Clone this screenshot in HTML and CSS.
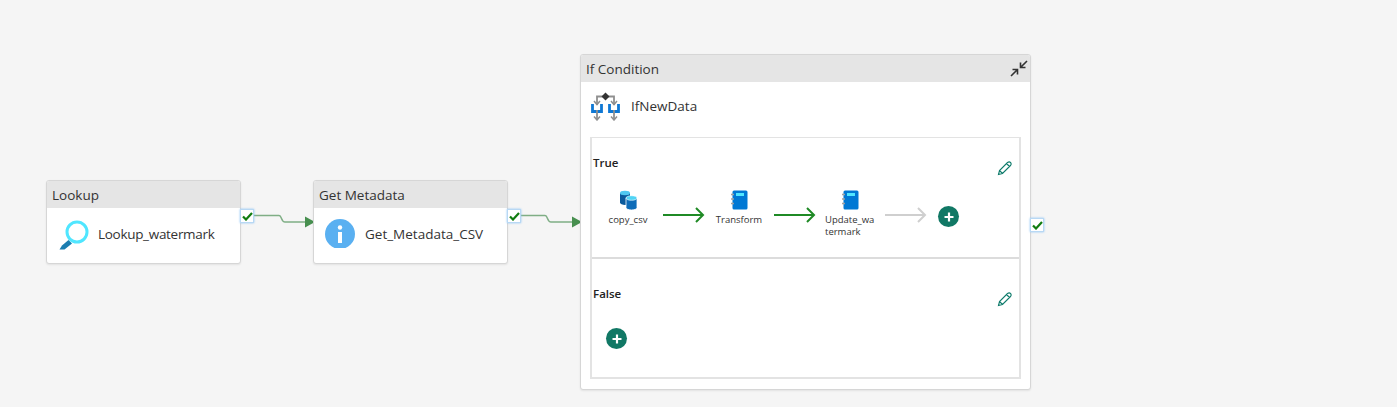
FILE: index.html
```html
<!DOCTYPE html>
<html lang="en">
<head>
<meta charset="utf-8">
<title>Pipeline canvas</title>
<link rel="stylesheet" href="styles.css">
</head>
<body>
<main class="canvas">
  <svg class="wires" width="1397" height="407" viewBox="0 0 1397 407" aria-hidden="true">
    <path class="wire" d="M254 215.5H279c3 0 2 6.500 6 6.500H306"/>
    <path class="wire-head" d="M305 216.500L315 222L305 227.500Z"/>
    <path class="wire" d="M521 215.500H545c3 0 2 6.500 6 6.500H573"/>
    <path class="wire-head" d="M572 216.500L582 222L572 227.500Z"/>
  </svg>

  <section class="card card-lookup">
    <header class="card-head">Lookup</header>
    <div class="card-body">
      <svg class="card-icon" width="30" height="32" viewBox="0 0 30 32" aria-hidden="true">
        <path d="M0.500 30.500L3 26.500L9.500 21L13 24.500L5.500 30.500Z" fill="#1b7db0"/>
        <circle cx="18" cy="13" r="10" fill="#fff" stroke="#50e6ff" stroke-width="3"/>
      </svg>
      <span class="card-name name-tight">Lookup_watermark</span>
    </div>
  </section>
  <span class="check check-1"><svg width="11" height="9" viewBox="0 0 11 9" aria-hidden="true"><path d="M1 4.500L4 7.500L10 1" fill="none" stroke="#107c10" stroke-width="2.200"/></svg></span>

  <section class="card card-meta">
    <header class="card-head">Get Metadata</header>
    <div class="card-body">
      <svg class="card-icon" width="30" height="29" viewBox="0 0 30 29" aria-hidden="true">
        <circle cx="15" cy="15" r="15" fill="#5ab0f1"/>
        <circle cx="15" cy="8.500" r="2.200" fill="#fff"/>
        <rect x="13" y="13" width="4" height="11" fill="#fff"/>
      </svg>
      <span class="card-name">Get_Metadata_CSV</span>
    </div>
  </section>
  <span class="check check-2"><svg width="11" height="9" viewBox="0 0 11 9" aria-hidden="true"><path d="M1 4.500L4 7.500L10 1" fill="none" stroke="#107c10" stroke-width="2.200"/></svg></span>

  <section class="card card-if">
    <header class="card-head if-head">
      <span>If Condition</span>
      <svg width="18" height="17" viewBox="0 0 18 17" aria-hidden="true">
        <path d="M17 1L11 7M10.500 2.500V7.500H15.500M1 16L7 10M2.500 9.500H7.500V14.500" fill="none" stroke="#333" stroke-width="1.600"/>
      </svg>
    </header>
    <div class="if-title">
      <svg width="30" height="30" viewBox="0 0 30 30" aria-hidden="true">
        <path d="M6 14V5.500H23V14" fill="none" stroke="#8f8f8f" stroke-width="1.800"/>
        <path d="M3 10L6 13.500L9 10M20 10L23 13.500L26 10" fill="none" stroke="#8f8f8f" stroke-width="1.500"/>
        <path d="M14.500 1.500L18.500 5.500L14.500 9.500L10.500 5.500Z" fill="#333"/>
        <path d="M1.500 13V20.500H10.500V13M18.500 13V20.500H27.500V13" fill="none" stroke="#0f78d4" stroke-width="2.800"/>
        <path d="M6 19V29M23 19V29" stroke="#8f8f8f" stroke-width="1.800"/>
        <path d="M3 25.500L6 29L9 25.500M20 25.500L23 29L26 25.500" fill="none" stroke="#8f8f8f" stroke-width="1.500"/>
      </svg>
      <span class="card-name">IfNewData</span>
    </div>
    <div class="branches">
      <div class="branch branch-true">
        <div class="branch-head">
          <span class="branch-label">True</span>
          <svg class="pencil" width="15" height="15" viewBox="0 0 15 15" aria-hidden="true"><path d="M1.500 13.500L2.500 9.500L10.500 1.500C11.500 .8 13 .9 13.600 1.700C14.300 2.600 14.200 3.700 13.500 4.500L5.500 12.500ZM2.500 9.500L5.500 12.500M9.500 2.500L12.500 5.500" fill="none" stroke="#107c6c" stroke-width="1.100"/></svg>
        </div>
        <div class="flow">
          <div class="activity">
            <svg width="19" height="20" viewBox="0 0 19 20" aria-hidden="true">
              <path d="M1 3V12.500C1 14 3.500 15 6 15S11 14 11 12.500V3Z" fill="#0b5a9c"/>
              <ellipse cx="6" cy="3" rx="5" ry="2.200" fill="#50c8f0"/>
              <path d="M7 8V17.500C7 19 9.500 20 12.500 20S18 19 18 17.500V8Z" fill="#0e6cb8" stroke="#fff" stroke-width=".8"/>
              <ellipse cx="12.500" cy="8" rx="5.500" ry="2.300" fill="#50d4f5" stroke="#fff" stroke-width=".6"/>
            </svg>
            <span class="activity-name">copy_csv</span>
          </div>
          <svg class="arrow" width="41" height="16" viewBox="0 0 41 16" aria-hidden="true"><path class="arrow-ok" d="M0 8H40M33 1L40 8L33 15"/></svg>
          <div class="activity">
            <svg width="17" height="20" viewBox="0 0 17 20" aria-hidden="true">
              <rect x="1.500" y="0.500" width="15" height="19" rx="1.500" fill="#0078d4"/>
              <rect x="5" y="3" width="8" height="3" fill="#50e6ff"/>
              <path d="M0 4.500H3M0 9H3M0 13.500H3" stroke="#a0a0a0" stroke-width="1.400"/>
            </svg>
            <span class="activity-name">Transform</span>
          </div>
          <svg class="arrow" width="41" height="16" viewBox="0 0 41 16" aria-hidden="true"><path class="arrow-ok" d="M0 8H40M33 1L40 8L33 15"/></svg>
          <div class="activity">
            <svg width="17" height="20" viewBox="0 0 17 20" aria-hidden="true">
              <rect x="1.500" y="0.500" width="15" height="19" rx="1.500" fill="#0078d4"/>
              <rect x="5" y="3" width="8" height="3" fill="#50e6ff"/>
              <path d="M0 4.500H3M0 9H3M0 13.500H3" stroke="#a0a0a0" stroke-width="1.400"/>
            </svg>
            <span class="activity-name activity-name-wrap">Update_watermark</span>
          </div>
          <svg class="arrow" width="41" height="16" viewBox="0 0 41 16" aria-hidden="true"><path class="arrow-idle" d="M0 8H40M33 1L40 8L33 15"/></svg>
          <span class="add add-true"><svg width="10" height="10" viewBox="0 0 10 10" aria-hidden="true"><path d="M5 .5V9.500M.5 5H9.500" stroke="#fff" stroke-width="2.200"/></svg></span>
        </div>
      </div>
      <div class="branch branch-false">
        <div class="branch-head">
          <span class="branch-label">False</span>
          <svg class="pencil" width="15" height="15" viewBox="0 0 15 15" aria-hidden="true"><path d="M1.500 13.500L2.500 9.500L10.500 1.500C11.500 .8 13 .9 13.600 1.700C14.300 2.600 14.200 3.700 13.500 4.500L5.500 12.500ZM2.500 9.500L5.500 12.500M9.500 2.500L12.500 5.500" fill="none" stroke="#107c6c" stroke-width="1.100"/></svg>
        </div>
        <span class="add add-false"><svg width="10" height="10" viewBox="0 0 10 10" aria-hidden="true"><path d="M5 .5V9.500M.5 5H9.500" stroke="#fff" stroke-width="2.200"/></svg></span>
      </div>
    </div>
  </section>
  <span class="check check-3"><svg width="11" height="9" viewBox="0 0 11 9" aria-hidden="true"><path d="M1 4.500L4 7.500L10 1" fill="none" stroke="#107c10" stroke-width="2.200"/></svg></span>
</main>
</body>
</html>
```
FILE: styles.css
```css
* { box-sizing: border-box; }
html, body { margin: 0; height: 100%; }
body {
  background: #f5f5f5;
  color: #303030;
  font-family: "Open Sans", "Noto Sans", "Liberation Sans", sans-serif;
  overflow: hidden;
}
.canvas { position: relative; width: 1397px; height: 407px; }
.wires { position: absolute; left: 0; top: 0; }
.wire { fill: none; stroke: #7fae85; stroke-width: 1.500; }
.wire-head { fill: #478f4f; }

.card {
  position: absolute;
  background: #fff;
  border: 1px solid #d6d6d6;
  border-radius: 3px;
  box-shadow: 0 1px 2px rgba(0, 0, 0, .08);
  overflow: hidden;
}
.card-lookup { left: 46px; top: 180px; width: 195px; height: 84px; }
.card-meta { left: 313px; top: 180px; width: 195px; height: 84px; }
.card-if { left: 580px; top: 54px; width: 451px; height: 336px; }
.card-head {
  height: 27px;
  padding: 1px 0 0 5px;
  background: #e5e5e5;
  font-size: 13.500px;
  line-height: 27px;
  color: #333;
}
.card-body { display: flex; align-items: flex-start; height: 56px; padding: 11px 0 0 11px; }
.card-icon { flex: none; }
.card-name { margin-left: 10px; font-size: 13.500px; line-height: 30px; color: #333; }
.card-lookup .card-body { padding-left: 12px; }
.card-lookup .card-name { margin-left: 9px; }
.name-tight { letter-spacing: -.3px; }

.if-head { display: flex; justify-content: space-between; align-items: center; padding: 0 2px 0 5px; }
.if-head span { margin-top: 1px; }
.if-title { display: flex; align-items: center; height: 48px; margin-bottom: 7px; padding-left: 10px; }
.if-title svg { flex: none; }
.if-title .card-name { margin-left: 10px; }

.branches { margin: 0 9px; width: 431px; height: 242px; border: 2px solid #e3e3e3; border-top-width: 1px; }
.branch { position: relative; padding: 0 7px 0 1px; }
.branch-true { height: 121px; border-bottom: 2px solid #dcdcdc; }
.branch-false { height: 118px; }
.branch-head { display: flex; justify-content: space-between; align-items: flex-start; padding-top: 16px; }
.branch-false .branch-head { padding-top: 26px; }
.branch-label { font-size: 11.500px; font-weight: 600; line-height: 18px; color: #222; }
.pencil { margin-top: 7px; }
.flow { display: flex; align-items: flex-start; height: 60px; margin-top: 14px; }
.activity { display: flex; flex-direction: column; align-items: center; width: 70px; flex: none; }
.activity-name { font-size: 9.500px; line-height: 12px; color: #333; margin-top: 4px; text-align: left; }
.activity-name-wrap { width: 50px; word-break: break-all; margin-top: 4px; }
.arrow { flex: none; margin-top: 17px; overflow: visible; }
.arrow-ok { fill: none; stroke: #1f8a25; stroke-width: 2; }
.arrow-idle { fill: none; stroke: #cfcfcf; stroke-width: 2; }
.add {
  display: flex;
  align-items: center;
  justify-content: center;
  width: 21px;
  height: 21px;
  border-radius: 50%;
  background: #117865;
  flex: none;
}
.add-true { margin: 16px 0 0 12px; }
.add-false { margin: 21px 0 0 13px; }

.check {
  position: absolute;
  display: flex;
  align-items: center;
  justify-content: center;
  width: 14px;
  height: 14px;
  background: #fff;
  border: 1px solid #b8d8f4;
  box-shadow: 0 0 2px #8cc4f4;
}
.check-1 { left: 240px; top: 209px; }
.check-2 { left: 507px; top: 209px; }
.check-3 { left: 1030px; top: 218px; }
```
